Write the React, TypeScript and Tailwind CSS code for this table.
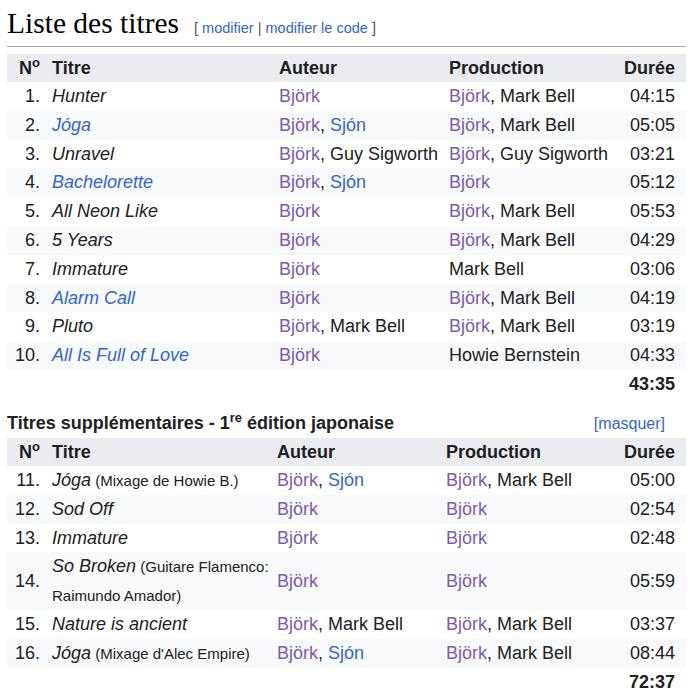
type Part = { t: string; k?: "visited" | "link" | "plain" };
type Track = {
  n: number;
  title: string;
  titleLink?: boolean;
  note?: string;
  auteur: Part[];
  prod: Part[];
  d: string;
};

const B: Part = { t: "Björk", k: "visited" };
const comma: Part = { t: ", " };

const main: Track[] = [
  { n: 1, title: "Hunter", auteur: [B], prod: [B, comma, { t: "Mark Bell" }], d: "04:15" },
  { n: 2, title: "Jóga", titleLink: true, auteur: [B, comma, { t: "Sjón", k: "link" }], prod: [B, comma, { t: "Mark Bell" }], d: "05:05" },
  { n: 3, title: "Unravel", auteur: [B, comma, { t: "Guy Sigworth" }], prod: [B, comma, { t: "Guy Sigworth" }], d: "03:21" },
  { n: 4, title: "Bachelorette", titleLink: true, auteur: [B, comma, { t: "Sjón", k: "link" }], prod: [B], d: "05:12" },
  { n: 5, title: "All Neon Like", auteur: [B], prod: [B, comma, { t: "Mark Bell" }], d: "05:53" },
  { n: 6, title: "5 Years", auteur: [B], prod: [B, comma, { t: "Mark Bell" }], d: "04:29" },
  { n: 7, title: "Immature", auteur: [B], prod: [{ t: "Mark Bell" }], d: "03:06" },
  { n: 8, title: "Alarm Call", titleLink: true, auteur: [B], prod: [B, comma, { t: "Mark Bell" }], d: "04:19" },
  { n: 9, title: "Pluto", auteur: [B, comma, { t: "Mark Bell" }], prod: [B, comma, { t: "Mark Bell" }], d: "03:19" },
  { n: 10, title: "All Is Full of Love", titleLink: true, auteur: [B], prod: [{ t: "Howie Bernstein" }], d: "04:33" },
];

const bonus: Track[] = [
  { n: 11, title: "Jóga", note: "(Mixage de Howie B.)", auteur: [B, comma, { t: "Sjón", k: "link" }], prod: [B, comma, { t: "Mark Bell" }], d: "05:00" },
  { n: 12, title: "Sod Off", auteur: [B], prod: [B], d: "02:54" },
  { n: 13, title: "Immature", auteur: [B], prod: [B], d: "02:48" },
  { n: 14, title: "So Broken", note: "(Guitare Flamenco: Raimundo Amador)", auteur: [B], prod: [B], d: "05:59" },
  { n: 15, title: "Nature is ancient", auteur: [B, comma, { t: "Mark Bell" }], prod: [B, comma, { t: "Mark Bell" }], d: "03:37" },
  { n: 16, title: "Jóga", note: "(Mixage d'Alec Empire)", auteur: [B, comma, { t: "Sjón", k: "link" }], prod: [B, comma, { t: "Mark Bell" }], d: "08:44" },
];

function Parts({ parts }: { parts: Part[] }) {
  return (
    <>
      {parts.map((p, i) =>
        p.k === "visited" ? (
          <span key={i} className="text-[#795cb2]">{p.t}</span>
        ) : p.k === "link" ? (
          <span key={i} className="text-[#3366cc]">{p.t}</span>
        ) : (
          <span key={i}>{p.t}</span>
        )
      )}
    </>
  );
}

function TrackTable({ tracks, total, cols }: { tracks: Track[]; total: string; cols: [number, number, number, number] }) {
  return (
    <table className="w-full border-collapse table-fixed">
      <colgroup>
        <col style={{ width: cols[0] }} />
        <col style={{ width: cols[1] }} />
        <col style={{ width: cols[2] }} />
        <col style={{ width: cols[3] }} />
        <col />
      </colgroup>
      <thead>
        <tr className="bg-[#eaecf0] font-bold h-[28px]">
          <th className="text-left pl-[12px] p-0 leading-[28px]">
            N<sup className="text-[13px] leading-none -top-[7px] relative align-baseline">o</sup>
          </th>
          <th className="text-left pl-[6px] p-0 leading-[28px]">Titre</th>
          <th className="text-left pl-[6px] p-0 leading-[28px]">Auteur</th>
          <th className="text-left pl-[6px] p-0 leading-[28px]">Production</th>
          <th className="text-right pr-[11px] p-0 leading-[28px]">Durée</th>
        </tr>
      </thead>
      <tbody>
        {tracks.map((t, i) => (
          <tr key={t.n} className={i % 2 === 1 ? "bg-[#f8f9fa]" : "bg-white"}>
            <td className="text-right pr-[6px] p-0 leading-[28.8px] align-middle">{t.n}.</td>
            <td className="pl-[6px] p-0 leading-[28.8px] align-middle">
              <i className={t.titleLink ? "text-[#3366cc]" : ""}>{t.title}</i>
              {t.note && <span className="text-[15px] leading-none"> {t.note}</span>}
            </td>
            <td className="pl-[6px] p-0 leading-[28.8px] align-middle">
              <Parts parts={t.auteur} />
            </td>
            <td className="pl-[6px] p-0 leading-[28.8px] align-middle">
              <Parts parts={t.prod} />
            </td>
            <td className="text-right pr-[11px] p-0 leading-[28.8px] align-middle">{t.d}</td>
          </tr>
        ))}
        <tr className="bg-white">
          <td colSpan={4} />
          <td className="text-right pr-[11px] p-0 leading-[28px] font-bold">{total}</td>
        </tr>
      </tbody>
    </table>
  );
}

export default function App() {
  return (
    <div className="bg-white w-[688px] h-[699px] pl-[7px] pr-[2px] pt-[6px] text-[18px] text-[#202122] font-['Liberation_Sans',Arial,sans-serif] overflow-hidden">
      <div className="flex items-baseline border-b border-[#a2a9b1] pb-[6px]">
        <h2 className="font-['Liberation_Serif','Times_New_Roman',serif] text-[29.5px] leading-[34px] text-black">
          Liste des titres
        </h2>
        <span className="ml-[15px] text-[14.5px] text-[#54595d]">
          [ <span className="text-[#3366cc]">modifier</span> | <span className="text-[#3366cc]">modifier le code</span> ]
        </span>
      </div>
      <div className="mt-[7px]">
        <TrackTable tracks={main} total="43:35" cols={[39, 227, 170, 169]} />
      </div>
      <div className="flex items-center justify-between mt-[15px] h-[22px]">
        <span className="font-bold">
          Titres supplémentaires - 1<sup className="text-[13px] leading-none relative -top-[7px] align-baseline">re</sup> édition japonaise
        </span>
        <span className="text-[#3366cc] text-[16px] mr-[21px]">[masquer]</span>
      </div>
      <div className="mt-[3px]">
        <TrackTable tracks={bonus} total="72:37" cols={[39, 225, 169, 169]} />
      </div>
    </div>
  );
}
